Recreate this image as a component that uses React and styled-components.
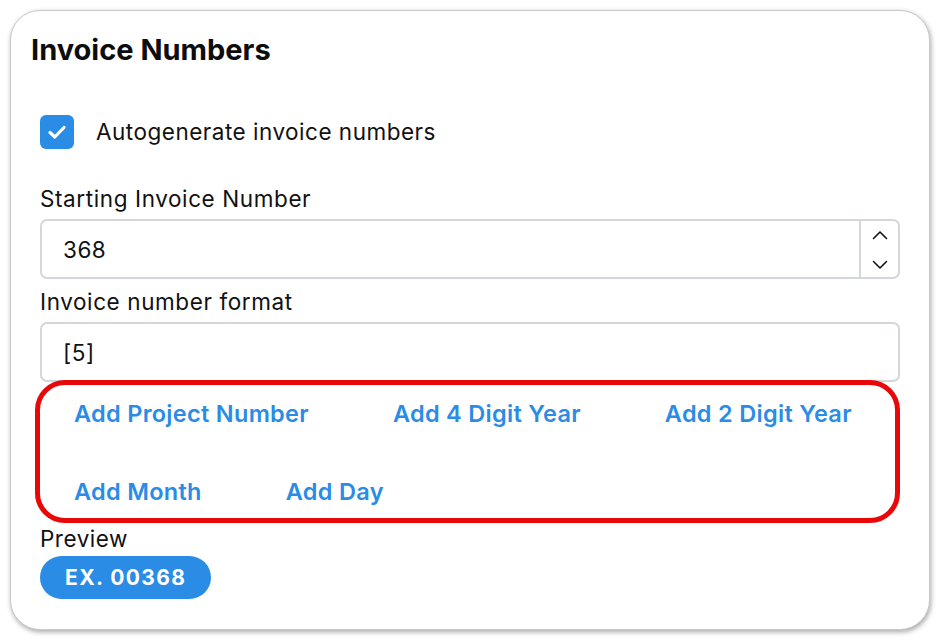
import React from "react";
import styled, { createGlobalStyle } from "styled-components";

const Global = createGlobalStyle`
  html, body { margin: 0; padding: 0; background: #ffffff; }
  body { font-family: Inter, "Noto Sans", sans-serif; color: #111; }
  * { box-sizing: border-box; }
`;

const Page = styled.div`
  padding: 10px;
  width: 940px;
  height: 640px;
`;

const Card = styled.section`
  width: 920px;
  height: 620px;
  border: 1px solid #c9c9c9;
  border-radius: 30px;
  background: #fff;
  box-shadow: 1px 2px 5px rgba(0, 0, 0, 0.35);
  padding: 22px 29px 0 20px;
  display: flex;
  flex-direction: column;
`;

const Title = styled.h2`
  margin: 0;
  font-size: 29px;
  line-height: 34px;
  font-weight: 700;
  color: #0d0d0d;
`;

const Body = styled.div`
  padding-left: 9px;
  display: flex;
  flex-direction: column;
`;

const CheckRow = styled.label`
  display: flex;
  align-items: center;
  gap: 22px;
  margin-top: 48px;
  font-size: 22.5px;
  letter-spacing: 0.5px;
  line-height: 34px;
`;

const CheckBox = styled.span`
  width: 34px;
  height: 34px;
  border-radius: 6px;
  background: #2b8ce6;
  display: flex;
  align-items: center;
  justify-content: center;
`;

const FieldLabel = styled.div`
  font-size: 22.5px;
  letter-spacing: 0.6px;
  line-height: 28px;
  margin-top: ${(p) => p.$top}px;
  margin-bottom: 6px;
`;

const InputBox = styled.div`
  height: 60px;
  flex: none;
  border: 2px solid #d3d7dc;
  border-radius: 7px;
  display: flex;
  align-items: stretch;
`;

const InputText = styled.div`
  flex: 1;
  display: flex;
  align-items: center;
  padding-left: 21px;
  font-size: 22.5px;
  letter-spacing: 0.5px;
`;

const Spinner = styled.div`
  width: 39px;
  border-left: 2px solid #d3d7dc;
  display: flex;
  flex-direction: column;
  align-items: center;
  justify-content: space-between;
  padding: 9px 0 7px;
`;

const Highlight = styled.div`
  margin: -2px 0 0 -5px;
  width: 865px;
  height: 143px;
  flex: none;
  border: 5px solid #e8080a;
  border-radius: 30px;
  padding: 15px 0 0 34px;
  display: flex;
  flex-wrap: wrap;
  column-gap: 84px;
  row-gap: 50px;
  align-content: flex-start;
`;

const LinkButton = styled.button`
  background: none;
  border: 0;
  padding: 0;
  font-family: inherit;
  font-size: 23.5px;
  letter-spacing: 0.3px;
  line-height: 28px;
  font-weight: 600;
  color: #2b8ce6;
  cursor: pointer;
`;

const PreviewLabel = styled.div`
  font-size: 22.5px;
  letter-spacing: 0.5px;
  line-height: 28px;
  margin-top: 2px;
`;

const Pill = styled.span`
  align-self: flex-start;
  margin-top: 3px;
  height: 43px;
  padding: 0 25px;
  border-radius: 22px;
  background: #2b8ce6;
  color: #fff;
  font-size: 21px;
  font-weight: 700;
  letter-spacing: 1.4px;
  display: flex;
  align-items: center;
`;

const Chevron = ({ up }) => (
  <svg width="16" height="10" viewBox="0 0 16 10" fill="none">
    <path
      d={up ? "M1.5 8.5 L8 2 L14.5 8.5" : "M1.5 1.5 L8 8 L14.5 1.5"}
      stroke="#111"
      strokeWidth="1.6"
      strokeLinecap="round"
      strokeLinejoin="round"
    />
  </svg>
);

const links = [
  "Add Project Number",
  "Add 4 Digit Year",
  "Add 2 Digit Year",
  "Add Month",
  "Add Day",
];

export default function App() {
  return (
    <>
      <Global />
      <Page>
        <Card>
          <Title>Invoice Numbers</Title>
          <Body>
            <CheckRow>
              <CheckBox>
                <svg width="20" height="16" viewBox="0 0 20 16" fill="none">
                  <path
                    d="M3 8.5 L7.8 13 L17 3.5"
                    stroke="#fff"
                    strokeWidth="3.2"
                    strokeLinecap="round"
                    strokeLinejoin="round"
                  />
                </svg>
              </CheckBox>
              Autogenerate invoice numbers
            </CheckRow>
            <FieldLabel $top={36}>Starting Invoice Number</FieldLabel>
            <InputBox>
              <InputText>368</InputText>
              <Spinner>
                <Chevron up />
                <Chevron />
              </Spinner>
            </InputBox>
            <FieldLabel $top={9}>Invoice number format</FieldLabel>
            <InputBox>
              <InputText>[5]</InputText>
            </InputBox>
            <Highlight>
              {links.map((l) => (
                <LinkButton key={l}>{l}</LinkButton>
              ))}
            </Highlight>
            <PreviewLabel>Preview</PreviewLabel>
            <Pill>EX. 00368</Pill>
          </Body>
        </Card>
      </Page>
    </>
  );
}
